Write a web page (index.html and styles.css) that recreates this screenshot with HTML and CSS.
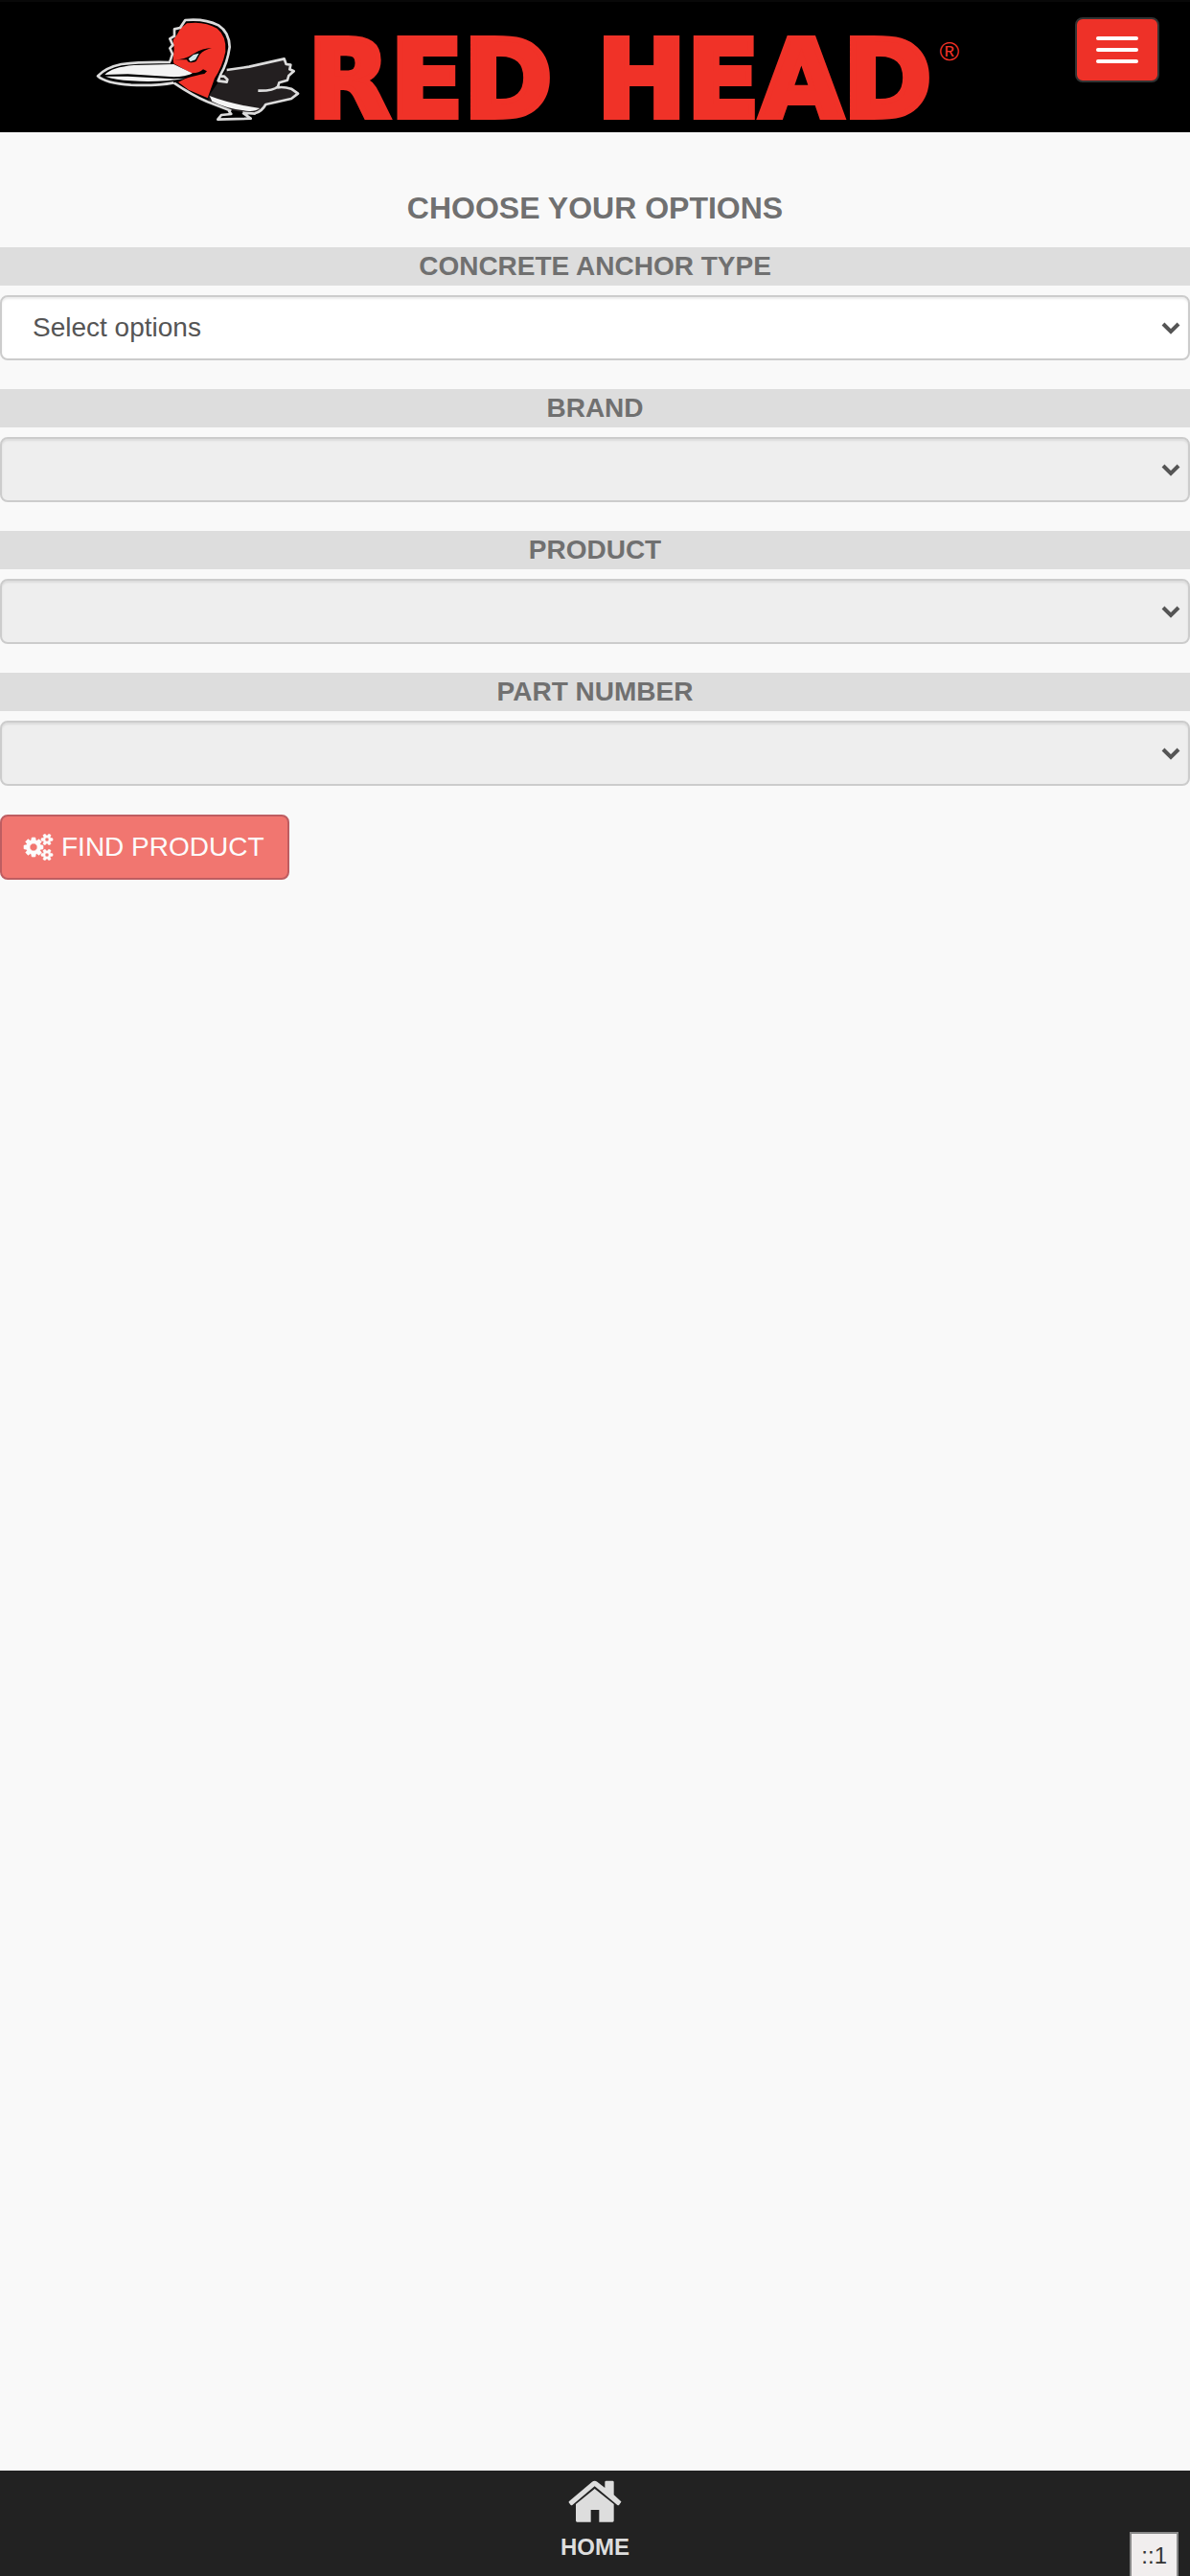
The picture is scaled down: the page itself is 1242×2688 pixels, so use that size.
FILE: index.html
```html
<!DOCTYPE html>
<html lang="en">
<head>
  <meta charset="UTF-8">
  <meta name="viewport" content="width=device-width, initial-scale=1">
  <title>Red Head</title>
  <link rel="stylesheet" href="styles.css">
</head>
<body>

<header class="navbar">
  <a class="logo" href="#">
    <svg class="logo-bird" viewBox="60 57 639 330" aria-hidden="true">
      <!-- tail and body -->
      <path class="body" d="M412 306 L445 258 L470 222 L540 212 L650 187 L656 204 L670 208 L667 220 L680 226 L664 240 L660 254 L634 264 L628 276 L672 281 L693 296 L672 312 L592 330 L574 352 L545 358 L470 346 L412 318 Z"/>
      <path class="line" d="M470 222 L540 212 L650 187 L656 204 L670 206 L667 220 L680 226 L664 240 L660 254 L634 262 L630 274 Q616 288 568 287 M628 277 Q650 274 672 281 L693 296 L672 312 L592 330 Q580 352 558 358"/>
      <path class="white" d="M416 303 Q480 328 574 342 Q560 352 540 351 Q470 344 424 320 Z"/>
      <!-- head -->
      <path class="red" d="M302 190 L305 155 L302 128 L314 112 L325 92 L345 76 Q400 68 440 92 Q470 116 466 165 Q455 215 432 248 L410 310 L350 284 L318 260 L366 236 L304 202 Z"/>
      <path class="line" d="M292 196 L300 172 L292 154 L301 144 L292 124 L306 116 L306 94 L324 90 L340 66 Q400 60 444 82 Q478 104 479 150 Q472 200 451 236 L443 256 L470 260 L472 252 L462 242 L452 242"/>
      <path class="line" d="M304 262 Q360 300 410 322 L484 350 M520 356 L545 374 L442 377 L453 363 L484 360 L476 350 M520 356 L560 359"/>
      <!-- eye -->
      <path d="M304 190 Q340 190 368 170 Q395 154 423 153 Q398 159 386 173 L374 195 Q350 204 345 190 Z"/>
      <path class="eye" d="M350 187 L366 174 L383 170 L372 190 L356 196 Z"/>
      <!-- beak -->
      <path d="M294 198 Q200 196 140 204 Q92 214 66 241 Q90 264 170 269 Q250 272 304 262 L366 236 Z"/>
      <path class="line" d="M294 198 Q200 196 140 204 Q92 214 66 241 Q90 264 170 269 Q250 272 304 262"/>
      <path class="white" d="M88 237 Q110 213 180 207 L304 204 L364 233 Q340 242 304 244 L160 235 Z"/>
      <path class="white" d="M90 242 L160 242 L304 250 L340 248 Q260 262 170 256 Q120 253 90 242 Z"/>
      <path d="M362 232 Q384 232 396 220 L408 226 L400 234 Q376 238 340 249 Z"/>
    </svg>
    <span class="logo-text"><span>RED</span><span>HEAD</span></span>
    <span class="logo-mark">®</span>
  </a>
  <button type="button" class="navbar-toggle" aria-label="Toggle navigation">
    <span class="icon-bar"></span>
    <span class="icon-bar"></span>
    <span class="icon-bar"></span>
  </button>
</header>

<main>
  <h1>CHOOSE YOUR OPTIONS</h1>

  <form class="options">
    <div class="form-group">
      <label for="anchorType">CONCRETE ANCHOR TYPE</label>
      <select id="anchorType" class="form-control">
        <option>Select options</option>
      </select>
    </div>

    <div class="form-group">
      <label for="brand">BRAND</label>
      <select id="brand" class="form-control" disabled></select>
    </div>

    <div class="form-group">
      <label for="product">PRODUCT</label>
      <select id="product" class="form-control" disabled></select>
    </div>

    <div class="form-group">
      <label for="partNumber">PART NUMBER</label>
      <select id="partNumber" class="form-control" disabled></select>
    </div>

    <button type="submit" class="btn" disabled>
      <svg class="icon-cogs" viewBox="0 0 1920 1792" aria-hidden="true">
        <path d="M832 896q0-106-75-181t-181-75-181 75-75 181 75 181 181 75 181-75 75-181zm768 512q0-52-38-90t-90-38-90 38-38 90q0 53 37.5 90.5t90.5 37.5 90.5-37.5 37.5-90.5zm0-1024q0-52-38-90t-90-38-90 38-38 90q0 53 37.5 90.5t90.5 37.5 90.5-37.5 37.5-90.5zm-384 421v185q0 10-7 19.5t-16 10.5l-155 24q-11 35-32 76 34 48 90 115 7 11 7 20 0 12-7 19-23 30-82.5 89.5t-78.5 59.5q-11 0-21-7l-115-90q-37 19-77 31-11 108-23 155-7 24-30 24h-186q-11 0-20-7.5t-10-17.5l-23-153q-34-10-75-31l-118 89q-7 7-20 7-11 0-21-8-144-133-144-160 0-9 7-19 10-14 41-53t47-61q-23-44-35-82l-152-24q-10-1-17-9.5t-7-19.5v-185q0-10 7-19.5t16-10.5l155-24q11-35 32-76-34-48-90-115-7-11-7-20 0-12 7-20 22-30 82-89t79-59q11 0 21 7l115 90q34-18 77-32 11-108 23-154 7-24 30-24h186q11 0 20 7.5t10 17.5l23 153q34 10 75 31l118-89q8-7 20-7 11 0 21 8 144 133 144 160 0 8-7 19-12 16-42 54t-45 60q23 48 34 82l152 23q10 2 17 10.5t7 19.5zm640 533v140q0 16-149 31-12 27-30 52 51 113 51 138 0 4-4 7-122 71-124 71-8 0-46-47t-52-68q-20 2-30 2t-30-2q-14 21-52 68t-46 47q-2 0-124-71-4-3-4-7 0-25 51-138-18-25-30-52-149-15-149-31v-140q0-16 149-31 13-29 30-52-51-113-51-138 0-4 4-7 4-2 35-20t59-34 30-16q8 0 46 46.5t52 67.5q20-2 30-2t30 2q51-71 92-112l6-2q4 0 124 70 4 3 4 7 0 25-51 138 17 23 30 52 149 15 149 31zm0-1024v140q0 16-149 31-12 27-30 52 51 113 51 138 0 4-4 7-122 71-124 71-8 0-46-47t-52-68q-20 2-30 2t-30-2q-14 21-52 68t-46 47q-2 0-124-71-4-3-4-7 0-25 51-138-18-25-30-52-149-15-149-31v-140q0-16 149-31 13-29 30-52-51-113-51-138 0-4 4-7 4-2 35-20t59-34 30-16q8 0 46 46.5t52 67.5q20-2 30-2t30 2q51-71 92-112l6-2q4 0 124 70 4 3 4 7 0 25-51 138 17 23 30 52 149 15 149 31z"/>
      </svg>
      FIND PRODUCT
    </button>
  </form>
</main>

<footer class="footer">
  <a class="home" href="#">
    <svg class="icon-home" viewBox="160 85 168 132" aria-hidden="true">
      <path d="M163 151 L235 90 Q243 84 251 90 L275 109 V91 q0-4 4-4 h20 q4 0 4 4 V131 L325 151 q2 2 0 4 l-6 8 q-2 2-5 0 L243 104 L173 163 q-2 2-5 0 l-6-8 q-1-2 1-4 Z"/>
      <path d="M184 160 L243 112 L303 160 V212 q0 4-4 4 H257 V178 H231 V216 H188 q-4 0-4-4 Z"/>
    </svg>
    HOME
  </a>
  <div class="host">::1</div>
</footer>

</body>
</html>
```
FILE: styles.css
```css
* {
  box-sizing: border-box;
}
body {
  margin: 0;
  min-height: 100vh;
  display: flex;
  flex-direction: column;
  background: #f9f9f9;
  color: #707070;
  font-family: "Liberation Sans", Arial, sans-serif;
  font-size: 28px;
  line-height: 40px;
}

/* header */
.navbar {
  display: flex;
  justify-content: space-between;
  align-items: flex-start;
  height: 138px;
  padding: 16px 32px 0 100px;
  background: #000;
  border-top: 2px solid #080808;
}
.logo {
  display: flex;
  align-items: flex-start;
  color: #f03228;
  text-decoration: none;
}
.logo-bird {
  width: 213px;
  height: 110px;
}
.logo-bird .body {
  fill: #231f20;
}
.logo-bird .red {
  fill: #f03228;
}
.logo-bird .white {
  fill: #f4f4f4;
}
.logo-bird .eye {
  fill: #cfe4e6;
}
.logo-bird .line {
  fill: none;
  stroke: #dcdcdc;
  stroke-width: 8;
  stroke-linejoin: round;
}
.logo-text {
  display: flex;
  gap: 46px;
  margin-left: 8px;
  font-family: "DejaVu Sans", sans-serif;
  font-size: 112px;
  font-weight: bold;
  line-height: 130px;
  -webkit-text-stroke: 6px #f03228;
}
.logo-mark {
  margin: 16px 0 0 8px;
  font-size: 28px;
}
.navbar-toggle {
  display: flex;
  flex-direction: column;
  gap: 8px;
  padding: 18px 20px;
  background: #ee3128;
  border: 2px solid #333;
  border-radius: 8px;
}
.icon-bar {
  width: 44px;
  height: 4px;
  border-radius: 2px;
  background: #fff;
}

/* options form */
h1 {
  margin: 58px 0 20px;
  font-size: 32px;
  line-height: 42px;
  text-align: center;
}
.form-group {
  margin-bottom: 30px;
}
label {
  display: block;
  margin-bottom: 10px;
  background: #ddd;
  font-weight: bold;
  text-align: center;
}
.form-control {
  display: block;
  width: 100%;
  height: 68px;
  padding: 12px 32px;
  border: 2px solid #ccc;
  border-radius: 8px;
  box-shadow: inset 0 2px 2px rgba(0,0,0,0.075);
  appearance: none;
  background: #fff url("data:image/svg+xml,%3Csvg xmlns='http://www.w3.org/2000/svg' viewBox='0 0 20 14'%3E%3Cpath d='M2 3l8 8 8-8' fill='none' stroke='%23555' stroke-width='4'/%3E%3C/svg%3E") no-repeat right 8px center / 20px 14px;
  color: #555;
  font-family: inherit;
  font-size: 28px;
  line-height: 40px;
}
.form-control:disabled {
  background-color: #eee;
  opacity: 1;
}
.btn {
  display: flex;
  align-items: center;
  gap: 8px;
  height: 68px;
  padding: 0 24px;
  background: #ee3128;
  border: 2px solid #9f0a10;
  border-radius: 8px;
  color: #fff;
  font-family: inherit;
  font-size: 28px;
  line-height: 40px;
  opacity: 0.65;
}
.icon-cogs {
  width: 30px;
  height: 28px;
  fill: #fff;
  stroke: #fff;
  stroke-width: 40;
  overflow: visible;
}

/* footer */
.footer {
  position: relative;
  display: flex;
  justify-content: center;
  height: 110px;
  margin-top: auto;
  background: #222;
}
.home {
  display: flex;
  flex-direction: column;
  align-items: center;
  gap: 6px;
  padding-top: 10px;
  color: #ddd;
  font-size: 24px;
  font-weight: bold;
  text-decoration: none;
}
.icon-home {
  width: 56px;
  height: 44px;
  fill: #ddd;
}
.host {
  position: absolute;
  right: 12px;
  bottom: 0;
  padding: 4px 10px 2px;
  background: #f1eeee;
  border: 2px solid #888;
  border-bottom: 0;
  color: #333;
  font-size: 24px;
  line-height: 38px;
}
```
